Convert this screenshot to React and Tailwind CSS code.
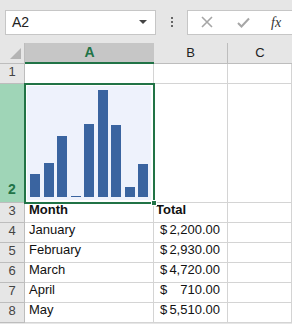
import React from 'react';

const BARS = [23, 34, 61, 1, 73, 107, 72, 10, 33];

const ROWS = [
  { n: 3, a: 'Month', b: 'Total', bold: true },
  { n: 4, a: 'January', b: '2,200.00' },
  { n: 5, a: 'February', b: '2,930.00' },
  { n: 6, a: 'March', b: '4,720.00' },
  { n: 7, a: 'April', b: '710.00' },
  { n: 8, a: 'May', b: '5,510.00' },
];

const cell = 'border-r border-b border-[#d4d4d4] bg-white';
const rowHead =
  'flex items-end justify-center pb-[2px] border-r border-b border-[#bdbdbd] bg-[#e6e6e6] text-[#444] text-[13px]';

const App = () => {
  return (
    <div
      className="w-[292px] h-[324px] overflow-hidden bg-[#e6e6e6] text-[#111]"
      style={{ fontFamily: '"Liberation Sans", Arial, sans-serif' }}
    >
      {/* FORMULA BAR */}
      <div className="flex items-center h-[43px] pt-[1px]">
        <div className="ml-[5px] w-[151px] h-[25px] bg-white border border-[#c6c6c6] flex items-center justify-between pl-[6px] pr-[8px]">
          <span className="text-[14px] text-[#222]">A2</span>
          <span className="w-0 h-0 border-l-[4px] border-r-[4px] border-t-[4px] border-l-transparent border-r-transparent border-t-[#444]" />
        </div>
        <div className="w-[31px] flex flex-col items-center gap-[2px]">
          <span className="w-[2px] h-[2px] bg-[#666]" />
          <span className="w-[2px] h-[2px] bg-[#666]" />
          <span className="w-[2px] h-[2px] bg-[#666]" />
        </div>
        <div className="flex-1 h-[25px] bg-white border border-[#c6c6c6] border-r-0 flex items-center">
          <svg width="12" height="12" viewBox="0 0 12 12" className="ml-[13px]">
            <path d="M1 1 L11 11 M11 1 L1 11" stroke="#a6a6a6" strokeWidth="1.6" />
          </svg>
          <svg width="13" height="11" viewBox="0 0 13 11" className="ml-[24px]">
            <path d="M1 6 L4.5 9.5 L12 1.5" stroke="#a6a6a6" strokeWidth="2" fill="none" />
          </svg>
          <span
            className="ml-[21px] text-[14px] italic text-[#333]"
            style={{ fontFamily: '"Liberation Serif", serif' }}
          >
            fx
          </span>
        </div>
      </div>

      {/* SHEET */}
      <div className="relative grid grid-cols-[25px_129px_74px_1fr] grid-rows-[21px_20px_119px_20px_20px_20px_20px_20px_20px]">
        {/* column headers */}
        <div className="relative bg-[#e6e6e6] border-r border-b border-[#bdbdbd]">
          <span className="absolute right-[3px] bottom-[4px] w-0 h-0 border-l-[11px] border-b-[11px] border-l-transparent border-b-[#b4b4b4]" />
        </div>
        <div className="flex items-center justify-center bg-[#c6c6c6] border-b-2 border-[#217346] text-[14px] font-bold text-[#217346]">
          A
        </div>
        <div className="flex items-center justify-center bg-[#e6e6e6] border-r border-b border-[#bdbdbd] text-[13px] text-[#222]">
          B
        </div>
        <div className="flex items-center justify-center bg-[#e6e6e6] border-b border-[#bdbdbd] text-[13px] text-[#222]">
          C
        </div>

        {/* row 1 */}
        <div className={rowHead}>1</div>
        <div className={cell} />
        <div className={cell} />
        <div className={cell} />

        {/* row 2 with chart */}
        <div className="flex items-end justify-center pb-[2px] border-r border-b border-[#bdbdbd] bg-[#9fd5b7] text-[#217346] text-[14px] font-bold">
          2
        </div>
        <div className="border-r border-b border-[#d4d4d4] bg-white p-[2px]">
          <div className="h-full bg-[#eef2fc] flex items-end justify-between pl-[3px] pr-[3px] pb-[3px]">
            {BARS.map((h, i) => (
              <div key={i} className="w-[10px] bg-[#3a64a0]" style={{ height: h }} />
            ))}
          </div>
        </div>
        <div className={cell} />
        <div className={cell} />

        {/* data rows */}
        {ROWS.map(r => (
          <React.Fragment key={r.n}>
            <div className={rowHead}>{r.n}</div>
            <div className={`${cell} flex items-end pl-[4px] pb-[3px] text-[13px] ${r.bold ? 'font-bold' : ''}`}>
              {r.a}
            </div>
            <div className={`${cell} flex items-end pb-[3px] text-[13px] ${r.bold ? 'font-bold pl-[2px]' : 'pl-[6px] pr-[7px] justify-between'}`}>
              {r.bold ? r.b : (
                <>
                  <span>$</span>
                  <span>{r.b}</span>
                </>
              )}
            </div>
            <div className={cell} />
          </React.Fragment>
        ))}

        {/* selection border over A2 */}
        <div className="absolute left-[24px] top-[40px] w-[131px] h-[121px] border-2 border-[#217346] pointer-events-none" />
        <div className="absolute left-[151px] top-[157px] w-[6px] h-[6px] bg-[#217346] border border-white pointer-events-none" />
      </div>
    </div>
  );
};

export default App;
